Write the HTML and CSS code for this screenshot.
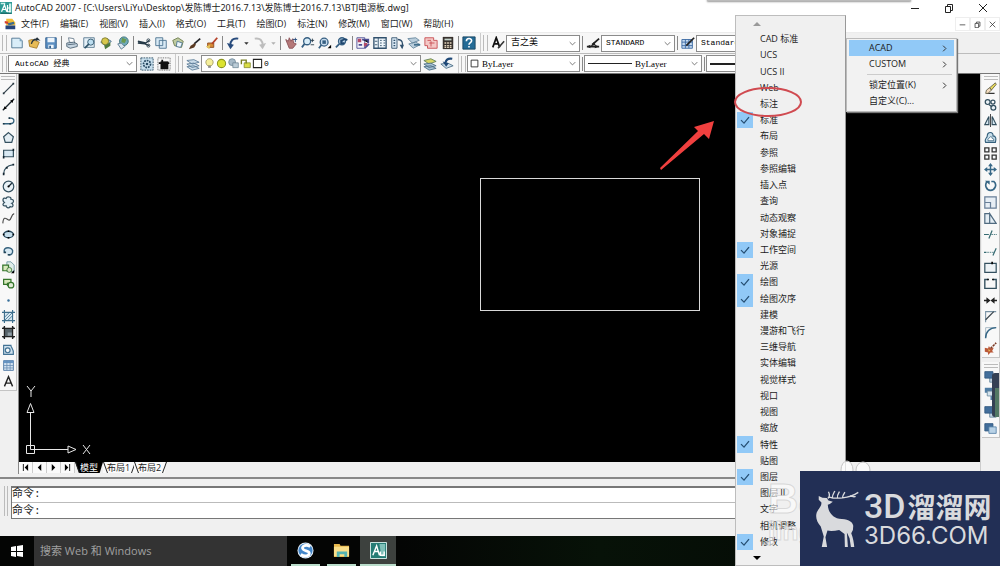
FILE: index.html
```html
<!DOCTYPE html>
<html lang="zh-CN">
<head>
<meta charset="utf-8">
<title>AutoCAD 2007</title>
<link rel="stylesheet" href="styles.css">
</head>
<body>
<svg class="sprite" aria-hidden="true">
  <symbol id="acad" viewBox="0 0 16 16"><path fill="#2d9a94" d="M0 0h16v16H0z"/><path fill="#c9efe9" d="M1 1h6v2H1zM12 2h3v12h-3z"/><path fill="none" stroke="#fff" stroke-width="1.600" d="M2 13 6 4l3 9M3 10h5M10 4v9h4M10 8h4"/><path stroke="#124c4c" d="M1 15h14"/></symbol>
  <symbol id="dwg" viewBox="0 0 16 16"><path fill="#f0bd35" d="m3 1 8 0 4 5v4H3z"/><path fill="#26457c" d="M2 10h13v5H2z"/><path fill="#d33c2e" d="m1 4 5 1-1 3-4-1z"/><path fill="#3d6b8d" d="m5 7 8-2 1 3-8 2z"/></symbol>
  <symbol id="new" viewBox="0 0 16 16"><path fill="#d9edf8" stroke="#49718f" d="M2 2.500h9l3 3v8H2z"/><path fill="#7ba4bd" d="M11 2v4h3z"/></symbol>
  <symbol id="open" viewBox="0 0 16 16"><path fill="#e7bb56" stroke="#a67c28" d="m2 5 4-1 8 3-3 7-8-2z"/><path fill="none" stroke="#26333d" stroke-width="1.500" d="M5 9c1-4 4-6 8-5l-2-2m2 2-3 1"/></symbol>
  <symbol id="save" viewBox="0 0 16 16"><path fill="#5c8fc2" stroke="#2f5d8c" d="M2 2h12v12H2z"/><path fill="#eef5fb" d="M4 2h8v5H4zM5 10h6v4H5z"/><path fill="#2f5d8c" d="M6 11h2v3H6z"/></symbol>
  <symbol id="print" viewBox="0 0 16 16"><path fill="#fff" stroke="#687b8c" d="m4 2 6 1 1 5-6-1z"/><path fill="#c6d5e1" stroke="#4d6273" d="m2 8 8-1 4 2v3l-8 2-4-2z"/><path stroke="#4d6273" d="m3 10 9-1"/></symbol>
  <symbol id="preview" viewBox="0 0 16 16"><path fill="#e4f0f8" stroke="#58788e" d="M2 2h12v11H2z"/><circle cx="10" cy="7" r="3.500" fill="#bddef0" stroke="#2e5369"/><path stroke="#2e5369" stroke-width="2" d="m8 9-5 5"/></symbol>
  <symbol id="publish" viewBox="0 0 16 16"><path fill="#a8c6d8" stroke="#436882" d="m2 7 7-4 5 3-6 6z"/><circle cx="7" cy="6" r="4" fill="#d8c84d" stroke="#7b7a30"/><path fill="#4f7a3e" d="m6 11 7-4v4l-6 4z"/></symbol>
  <symbol id="globe" viewBox="0 0 16 16"><circle cx="9" cy="6" r="5" fill="#6ea9b9" stroke="#376e75"/><path fill="#6a9b4f" d="m7 2 5 2-2 4-4-1z"/><path fill="#d8e6ef" stroke="#58788e" d="m2 9 4-1 4 4-4 3z"/></symbol>
  <symbol id="cut" viewBox="0 0 16 16"><path fill="none" stroke="#263a48" stroke-width="1.500" d="m1 6 9 2 4-3M1 8l8 1 5 2"/><circle cx="13" cy="5" r="1.700" fill="none" stroke="#263a48"/><circle cx="13" cy="11" r="1.700" fill="none" stroke="#263a48"/></symbol>
  <symbol id="copy" viewBox="0 0 16 16"><path fill="#d9eaf5" stroke="#49718f" d="M2 2h8v9H2zM6 5h8v9H6z"/></symbol>
  <symbol id="paste" viewBox="0 0 16 16"><path fill="#bfcba0" stroke="#6b7a4b" d="m2 5 6-3 6 4-2 7-8-2z"/><path fill="#eef7fc" stroke="#49718f" d="m7 6 6 2-2 5-5-1z"/></symbol>
  <symbol id="brush" viewBox="0 0 16 16"><path stroke="#26262a" stroke-width="2" d="m14 3-7 6"/><path fill="#5b3a22" d="m8 8-5 3-2 4 6-2 2-3z"/></symbol>
  <symbol id="match" viewBox="0 0 16 16"><path fill="#d68a35" stroke="#8b4a20" d="M3 8h7v5H3z"/><path stroke="#b5422a" stroke-width="2" d="M14 2 8 9"/><path fill="#e6c55d" d="m1 12 5-2-1 5z"/></symbol>
  <symbol id="undo" viewBox="0 0 16 16"><path fill="none" stroke="#284b7c" stroke-width="2.300" d="M14 3C8 2 5 5 5 11"/><path fill="#284b7c" d="m1 8 8 2-4 5z"/></symbol>
  <symbol id="redo" viewBox="0 0 16 16"><path fill="none" stroke="#bdbdbd" stroke-width="2.300" d="M2 3c6-1 9 2 9 8"/><path fill="#bdbdbd" d="m15 8-8 2 4 5z"/></symbol>
  <symbol id="dd" viewBox="0 0 8 16"><path fill="#333" d="M2 7h5L4.500 10z"/></symbol>
  <symbol id="pan" viewBox="0 0 16 16"><path fill="#b57878" stroke="#8a5157" d="m2 4 3 2 1-4 2 4 2-3 1 5 3 1-4 5H6z"/><path stroke="#284b7c" d="M10 4h5m-2-2v5"/></symbol>
  <symbol id="zoom" viewBox="0 0 16 16"><circle cx="7" cy="6" r="4" fill="#d9edf8" stroke="#365f82" stroke-width="1.500"/><path stroke="#365f82" stroke-width="2" d="m4 9-3 4"/><path stroke="#263a48" d="M11 5h4m-2-2v4m-2 3h4"/></symbol>
  <symbol id="zoomw" viewBox="0 0 16 16"><circle cx="7" cy="7" r="4.500" fill="#c8dced" stroke="#365f82" stroke-width="1.500"/><path fill="#365f82" d="M5 5h4v4H5z"/><path stroke="#365f82" stroke-width="2" d="m4 10-3 4"/><path d="M11 14h4v-4z"/></symbol>
  <symbol id="zoomp" viewBox="0 0 16 16"><circle cx="8" cy="6" r="4" fill="#bdd4e8" stroke="#365f82" stroke-width="1.500"/><path stroke="#365f82" stroke-width="2" d="m5 9-4 4"/><path fill="none" stroke="#1e466e" stroke-width="2" d="M7 7c2-4 5-4 7-2M7 4v4h4"/></symbol>
  <symbol id="props" viewBox="0 0 16 16"><path fill="#f4f4fa" stroke="#4c4e93" d="M1 2h9v12H1z"/><path fill="#b34a68" d="M2 3h4v4H2zM9 8h4v4H9z"/><path stroke="#4c4e93" stroke-width="2" d="M7 4h7v4M3 10h4m3 4 5-5"/></symbol>
  <symbol id="center" viewBox="0 0 16 16"><path fill="#edf5fa" stroke="#31516d" stroke-width="1.500" d="M1 2h14v12H1z"/><path stroke="#31516d" d="M6 2v12M2 6h3M2 10h3m3-5h2m2 0h2M8 8h2m2 0h2m-6 3h2m2 0h2"/></symbol>
  <symbol id="palette" viewBox="0 0 16 16"><path fill="#dceaf5" stroke="#31516d" d="M2 2h6v12H2z"/><path fill="none" stroke="#31516d" stroke-width="1.500" d="M4 5h2M4 8h2m-2 3h2m3-7c5 0 6 4 5 9"/><path fill="#31516d" d="M11 10h5l-2 5z"/></symbol>
  <symbol id="sheets" viewBox="0 0 16 16"><path fill="#b9cddb" stroke="#64859b" d="m1 3 9-1 4 3-8 3zM2 9l8-2 5 3-8 4z"/><path fill="#3f6d8b" d="M8 9h7v2H8z"/></symbol>
  <symbol id="markup" viewBox="0 0 16 16"><path fill="#f4c7c5" stroke="#c74c50" d="M1 2h10v3h4v9H4v-3H1z"/><path stroke="#c74c50" d="M4 5h4m-2 3h6m-4-2v6"/></symbol>
  <symbol id="calc" viewBox="0 0 16 16"><path fill="#38312d" d="M2 1h12v14H2z"/><path fill="#c5d3cb" d="M4 3h8v2H4z"/><path stroke="#e4d5bd" stroke-width="1.500" stroke-dasharray="2 1" d="M4 8h8m-8 3h8m-8 2h8"/></symbol>
  <symbol id="help" viewBox="0 0 16 16"><path fill="#246b96" stroke="#174460" d="M1 1h14v14H1z"/><path fill="none" stroke="#fff" stroke-width="1.800" d="M5 6c0-4 6-4 6-.5 0 2-3 2-3 4.500m0 1.500v1.500"/></symbol>
  <symbol id="tstyle" viewBox="0 0 16 16"><path fill="none" stroke="#111" stroke-width="2" d="m2 13 4-11 4 11M4 9h5"/><path stroke="#333" stroke-width="1.800" d="m15 6-7 8"/></symbol>
  <symbol id="dstyle" viewBox="0 0 16 16"><path stroke="#222" stroke-width="2" d="M1 12h14M15 3 7 10"/><path fill="#222" d="m1 12 4-2v4zm14 0-5-2v4zM9 7l-4 5 6-2z"/></symbol>
  <symbol id="tbstyle" viewBox="0 0 16 16"><path fill="#c5daf0" stroke="#3867a1" d="M1 4h12v10H1z"/><path stroke="#3867a1" d="M1 7h12M5 4v10m4-10v10M1 11h12"/><path stroke="#222" stroke-width="2" d="m15 2-9 9"/></symbol>
  <symbol id="gear" viewBox="0 0 16 16"><path fill="#c9e0ee" stroke="#294b64" stroke-dasharray="2 1" d="M1 1h14v14H1z"/><circle cx="8" cy="8" r="4" fill="none" stroke="#294b64" stroke-width="2" stroke-dasharray="2 1"/><circle cx="8" cy="8" r="1.500" fill="#294b64"/></symbol>
  <symbol id="mywork" viewBox="0 0 16 16"><path fill="none" stroke="#555" stroke-dasharray="1 1" d="M1 1h14v14H1z"/><path fill="#111" d="M4 5h9v9H4z"/><path stroke="#111" stroke-width="2" d="M2 7h12M6 3v4"/></symbol>
  <symbol id="layers" viewBox="0 0 16 16"><path fill="#cbdce9" stroke="#5f7f99" d="m1 4 8-1 6 3-8 2zm0 4 8-1 6 3-8 2zm0 3 8-1 6 3-8 2z"/></symbol>
  <symbol id="laymake" viewBox="0 0 16 16"><path fill="#d7d566" stroke="#5f7f59" d="m1 4 8-2 6 3-8 3z"/><path fill="#a7c1d3" stroke="#4b6e86" d="m1 8 8-1 6 3-8 2zm0 3 8-1 6 3-8 2z"/></symbol>
  <symbol id="layprev" viewBox="0 0 16 16"><path fill="#cbdce9" stroke="#4b6e86" d="m1 8 8-1 6 3-8 3z"/><path fill="none" stroke="#1d4776" stroke-width="2.500" d="M14 2C8 1 7 4 6 7"/><path fill="#1d4776" d="m3 5 7 2-3 4z"/></symbol>
  <symbol id="bulb" viewBox="0 0 16 16"><path fill="#f5ef9b" stroke="#8c8545" d="M5 11C0 6 4 1 8 1s8 5 3 10z"/><path stroke="#666" stroke-width="2" d="M6 13h4"/></symbol>
  <symbol id="sun" viewBox="0 0 16 16"><circle cx="8" cy="8" r="6" fill="#dce330" stroke="#8b9420" stroke-width="1.500"/></symbol>
  <symbol id="vp" viewBox="0 0 16 16"><circle cx="6" cy="6" r="5" fill="#a7bac8" stroke="#617c8e"/><path fill="#bccdd8" stroke="#617c8e" d="M7 7h8v7H7z"/></symbol>
  <symbol id="lock" viewBox="0 0 16 16"><path fill="#dadd45" stroke="#777e20" d="M6 7h9v7H6z"/><path fill="none" stroke="#777e20" stroke-width="2" d="M2 9V3h7v5"/></symbol>
  <symbol id="box" viewBox="0 0 16 16"><path fill="#fff" stroke="#222" stroke-width="1.500" d="M2 2h12v12H2z"/></symbol>
  <symbol id="line" viewBox="0 0 16 16"><path stroke="#34444e" stroke-width="1.500" d="M2 14 14 2"/><path fill="#25343e" d="M1 13h2v2H1zM13 1h2v2h-2z"/></symbol>
  <symbol id="xline" viewBox="0 0 16 16"><path stroke="#17232b" stroke-width="1.600" d="M1 15 15 1"/><path d="m2 14 1-4 3 3zM14 2l-4 1 3 3z"/></symbol>
  <symbol id="pline" viewBox="0 0 16 16"><path fill="none" stroke="#32607b" stroke-width="1.600" d="M2 12h8c6 0 6-7 1-7H9"/><path fill="#193645" d="M1 11h2v2H1zm8 0h2v2H9zM8 4h2v2H8z"/></symbol>
  <symbol id="polygon" viewBox="0 0 16 16"><path fill="#e3edf3" stroke="#34505f" stroke-width="1.500" d="m8 2 6 5-2 7H4L2 7z"/></symbol>
  <symbol id="rect" viewBox="0 0 16 16"><path fill="#d9e9f3" stroke="#34505f" stroke-width="1.500" d="M2 4h12v8H2z"/><path fill="#12232e" d="M13 2h2v3h-2zM1 11h2v3H1z"/></symbol>
  <symbol id="arc" viewBox="0 0 16 16"><path fill="none" stroke="#34505f" stroke-width="1.500" d="M2 14C2 8 6 3 14 2"/><path fill="#12232e" d="M1 12h2v3H1zM5 5h2v2H5zM13 1h2v2h-2z"/></symbol>
  <symbol id="circle" viewBox="0 0 16 16"><circle cx="8" cy="8" r="6.500" fill="#e9f2f7" stroke="#34505f" stroke-width="1.500"/><path stroke="#12232e" stroke-width="1.500" d="m8 8 4-4"/><circle cx="8" cy="8" r="1.300"/></symbol>
  <symbol id="cloud" viewBox="0 0 16 16"><path fill="#e5f0f6" stroke="#34505f" stroke-width="1.500" d="M3 8C0 6 1 1 5 3c1-3 7-2 6 1 4 0 4 4 1 5 3 2 1 6-2 4-2 3-5 1-5-1-4 1-5-2-2-4z"/></symbol>
  <symbol id="spline" viewBox="0 0 16 16"><path fill="none" stroke="#4d4d4d" stroke-width="1.400" d="M1 14C2 2 7 11 9 10c3-1 2-7 6-8"/></symbol>
  <symbol id="ellipse" viewBox="0 0 16 16"><ellipse cx="8" cy="8" rx="6" ry="4" fill="#c7deeb" stroke="#24465b" stroke-width="1.700"/><path d="M7 3h2v2H7zM1 7h2v2H1zm12 0h2v2h-2zM7 11h2v2H7z"/></symbol>
  <symbol id="earc" viewBox="0 0 16 16"><path fill="#d7e8f2" stroke="#34607c" stroke-width="1.700" d="M3 9C0 1 15 2 13 9c-1 4-5 3-5 3"/><path fill="#24465b" d="M2 8h3v2H2zm5 3h3v2H7z"/></symbol>
  <symbol id="insert" viewBox="0 0 16 16"><path fill="#dfece9" stroke="#638e9b" d="M6 1h5l4 4v8H6z"/><path fill="#d8e9bd" stroke="#34752b" stroke-width="1.500" d="M1 5h7v7H1z"/><circle cx="9" cy="11" r="3" fill="#d7e5c6" stroke="#34752b"/><path d="M15 11v4h-4z"/></symbol>
  <symbol id="block" viewBox="0 0 16 16"><path fill="#d8e9bd" stroke="#34752b" stroke-width="1.500" d="M2 3h9v6H2z"/><circle cx="11" cy="10" r="3.500" fill="#e2ecd7" stroke="#34752b" stroke-width="1.500"/><path stroke="#34752b" stroke-width="2" d="M7 7v4"/></symbol>
  <symbol id="point" viewBox="0 0 16 16"><circle cx="8" cy="8" r="1.500" fill="#386f9a"/></symbol>
  <symbol id="hatch" viewBox="0 0 16 16"><path fill="#d6e8f2" stroke="#3f6f8d" stroke-width="1.400" d="M3 3h10v10H3zM3 0v3H0m13-3v3h3M0 13h3v3m10 0v-3h3"/><path stroke="#3f6f8d" d="m3 9 6-6M3 13 13 3M7 13l6-6"/></symbol>
  <symbol id="gradient" viewBox="0 0 16 16"><path fill="#58646b" stroke="#222" stroke-width="1.600" d="M3 3h10v10H3zM3 0v3H0m13-3v3h3M0 13h3v3m10 0v-3h3"/><path fill="#8d9ba3" d="M7 8h5v4H7z"/></symbol>
  <symbol id="region" viewBox="0 0 16 16"><path fill="#cfe1ed" stroke="#427294" stroke-width="1.400" d="M2 3h9c0 3 4 4 3 11H2z"/><circle cx="7" cy="9" r="3" fill="#f4f8fa" stroke="#427294" stroke-width="1.500"/></symbol>
  <symbol id="table" viewBox="0 0 16 16"><path fill="#d5e4f2" stroke="#416c9d" d="M2 2h12v12H2z"/><path fill="#6695c4" d="M2 2h12v3H2z"/><path stroke="#6b8fb5" d="M6 2v12m4-12v12M2 8h12M2 11h12"/></symbol>
  <symbol id="text" viewBox="0 0 16 16"><path fill="none" stroke="#222" stroke-width="1.700" d="m3 14 5-12 5 12M5 10h6"/></symbol>
  <symbol id="erase" viewBox="0 0 16 16"><path stroke="#333" stroke-width="1.500" d="M3 14h10"/><path fill="#e7d95c" stroke="#5b5940" d="m7 7 7-6 1 2-6 7z"/><path fill="#f4dcc0" stroke="#5b5940" d="m3 10 4-3 2 3-4 4H2z"/></symbol>
  <symbol id="dup" viewBox="0 0 16 16"><circle cx="4.500" cy="5" r="3" fill="#e9f1f6" stroke="#34505f" stroke-width="1.500"/><circle cx="11.500" cy="12" r="3" fill="#e9f1f6" stroke="#34505f" stroke-width="1.500"/><circle cx="11" cy="5" r="2.500" fill="none" stroke="#34505f" stroke-width="1.500"/><path fill="none" stroke="#34505f" stroke-width="1.500" d="m6 8 4 3"/></symbol>
  <symbol id="mirror" viewBox="0 0 16 16"><path fill="#d7e8f2" stroke="#34505f" stroke-width="1.400" d="M6 3v10H1zm4 0v10h5z"/><path stroke="#222" d="M8 0v16"/></symbol>
  <symbol id="offset" viewBox="0 0 16 16"><path fill="#c8deea" stroke="#34607c" stroke-width="1.400" d="M2 14C0 9 4 9 4 6c0-6 8-5 7 0 4 0 4 4 3 8z"/><path fill="#fff" stroke="#34607c" d="M5 12c-1-2 1-3 2-4 1-2 3-1 3 1 2 0 2 1 2 3z"/></symbol>
  <symbol id="array" viewBox="0 0 16 16"><path fill="#f7fafc" stroke="#333" stroke-width="1.600" d="M1 1h5v5H1zm9 0h5v5h-5zM1 10h5v5H1zm9 0h5v5h-5z"/></symbol>
  <symbol id="move" viewBox="0 0 16 16"><path stroke="#376786" stroke-width="1.800" d="M8 2v12M2 8h12"/><path fill="#376786" d="m8 0 3 4H5zm0 16 3-4H5zM0 8l4-3v6zm16 0-4-3v6z"/></symbol>
  <symbol id="rotate" viewBox="0 0 16 16"><path fill="none" stroke="#376786" stroke-width="2" d="M4 3C0 7 3 14 8 14s9-7 4-11H9"/><path fill="#376786" d="M1 2h6v5z"/></symbol>
  <symbol id="scale" viewBox="0 0 16 16"><path fill="#e7eef5" stroke="#687f98" stroke-width="1.500" d="M1 1h14v14H1zM1 8h7v7"/></symbol>
  <symbol id="stretch" viewBox="0 0 16 16"><path fill="#e4edf4" stroke="#506b80" stroke-width="1.500" d="M1 2h6v12H1zm6 0 8 12H7z"/></symbol>
  <symbol id="trim" viewBox="0 0 16 16"><path stroke="#366b72" stroke-width="1.500" d="M0 8h6m4-5L6 13"/><path stroke="#366b72" stroke-dasharray="2 1" d="M9 8h7"/></symbol>
  <symbol id="extend" viewBox="0 0 16 16"><path stroke="#366b72" stroke-width="1.500" d="M0 9h3m12-5-4 9"/><path stroke="#366b72" stroke-dasharray="2 1" d="M4 9h8"/></symbol>
  <symbol id="break1" viewBox="0 0 16 16"><path fill="#eef3f6" stroke="#34505f" stroke-width="1.500" d="M1 3h14v11H1z"/><path d="M9 1h2v3H9z"/></symbol>
  <symbol id="break2" viewBox="0 0 16 16"><path fill="none" stroke="#34505f" stroke-width="1.700" d="M5 3H1v11h14V3h-4"/><path d="M4 2h2v2H4zm6 0h2v2h-2z"/></symbol>
  <symbol id="join" viewBox="0 0 16 16"><path stroke="#222" stroke-width="2" d="M0 8h5m6 0h5"/><path fill="#222" d="m3 4 5 4-5 4zm10 0L8 8l5 4z"/></symbol>
  <symbol id="chamfer" viewBox="0 0 16 16"><path fill="none" stroke="#7791a3" stroke-width="1.300" d="M2 15V2h13"/><path fill="none" stroke="#39444b" stroke-width="1.500" d="M2 12 12 2"/></symbol>
  <symbol id="fillet" viewBox="0 0 16 16"><path fill="none" stroke="#9aaebb" d="M2 14V2h13"/><path fill="none" stroke="#376786" stroke-width="1.800" d="M2 15C2 7 7 2 15 2"/></symbol>
  <symbol id="explode" viewBox="0 0 16 16"><path fill="#b95737" d="m1 7 4 1 1-3 2 3 4-1-2 4 2 2-4 0-3 3v-3l-4-1z"/><path stroke="#7c3a25" stroke-width="2" stroke-dasharray="3 1" d="m8 8 7-7"/><path fill="#e9bc55" d="m5 9 3 1-2 2z"/></symbol>
  <symbol id="order" viewBox="0 0 16 16"><path fill="#bed1df" stroke="#66869b" d="M7 7h8v8H7z"/><path fill="#426e9b" stroke="#2f567e" d="M1 2h10v8H1z"/></symbol>
  <symbol id="order2" viewBox="0 0 16 16"><path fill="#507da4" d="M1 1h9v6H1zm7 7h8v8H8z"/><path fill="#d6e4ee" stroke="#66869b" d="M4 5h8v6H4z"/></symbol>
  <symbol id="order3" viewBox="0 0 16 16"><path fill="#426e9b" stroke="#2f567e" d="M1 2h10v9H1z"/><path fill="#b9d2e6" stroke="#507da4" d="M6 6h9v8H6z"/></symbol>
  <symbol id="chev" viewBox="0 0 10 10"><path fill="none" stroke="#444" d="m1 3 4 4 4-4"/></symbol>
  <symbol id="right" viewBox="0 0 10 10"><path fill="none" stroke="#333" stroke-width="1.400" d="m3 1 4 4-4 4"/></symbol>
  <symbol id="check" viewBox="0 0 10 10"><path fill="none" stroke="#264f73" stroke-width="1.300" d="m1 5 3 3 5-6"/></symbol>
  <symbol id="min" viewBox="0 0 10 10"><path stroke="#222" d="M1 5.500h8"/></symbol>
  <symbol id="restore" viewBox="0 0 10 10"><path fill="none" stroke="#222" d="M1.500 3.500h5v6h-5zM3.500 3V1.500h5v6H7"/></symbol>
  <symbol id="close" viewBox="0 0 10 10"><path stroke="#222" d="m1 1 8 8m0-8L1 9"/></symbol>
</svg>

<div class="app">
  <header class="titlebar">
    <svg class="appicon"><use href="#acad"/></svg>
    <h1>AutoCAD 2007 - [C:\Users\LiYu\Desktop\发陈博士2016.7.13\发陈博士2016.7.13\BTJ电源板.dwg]</h1>
    <div class="wincontrols">
      <button aria-label="最小化"><svg><use href="#min"/></svg></button>
      <button aria-label="还原"><svg><use href="#restore"/></svg></button>
      <button aria-label="关闭"><svg><use href="#close"/></svg></button>
    </div>
  </header>
  <nav class="menubar">
    <svg class="docicon"><use href="#dwg"/></svg>
    <button>文件(F)</button><button>编辑(E)</button><button>视图(V)</button><button>插入(I)</button><button>格式(O)</button><button>工具(T)</button><button>绘图(D)</button><button>标注(N)</button><button>修改(M)</button><button>窗口(W)</button><button>帮助(H)</button>
    <div class="doccontrols">
      <button aria-label="最小化图形"><svg><use href="#min"/></svg></button>
      <button aria-label="还原图形"><svg><use href="#restore"/></svg></button>
      <button aria-label="关闭图形"><svg><use href="#close"/></svg></button>
    </div>
  </nav>

  <div class="toolrow">
    <div class="toolbar">
      <i class="grip"></i>
      <button class="tool" aria-label="新建"><svg><use href="#new"/></svg></button>
      <button class="tool" aria-label="打开"><svg><use href="#open"/></svg></button>
      <button class="tool" aria-label="保存"><svg><use href="#save"/></svg></button>
      <i class="sep"></i>
      <button class="tool" aria-label="打印"><svg><use href="#print"/></svg></button>
      <button class="tool" aria-label="打印预览"><svg><use href="#preview"/></svg></button>
      <button class="tool" aria-label="发布"><svg><use href="#publish"/></svg></button>
      <button class="tool" aria-label="三维 DWF"><svg><use href="#globe"/></svg></button>
      <i class="sep"></i>
      <button class="tool" aria-label="剪切"><svg><use href="#cut"/></svg></button>
      <button class="tool" aria-label="复制"><svg><use href="#copy"/></svg></button>
      <button class="tool" aria-label="粘贴"><svg><use href="#paste"/></svg></button>
      <button class="tool" aria-label="特性匹配"><svg><use href="#brush"/></svg></button>
      <button class="tool" aria-label="块编辑器"><svg><use href="#match"/></svg></button>
      <i class="sep"></i>
      <button class="tool" aria-label="放弃"><svg><use href="#undo"/></svg></button>
      <button class="drop" aria-label="放弃列表"><svg><use href="#dd"/></svg></button>
      <button class="tool" aria-label="重做"><svg><use href="#redo"/></svg></button>
      <button class="drop off" aria-label="重做列表"><svg><use href="#dd"/></svg></button>
      <i class="sep"></i>
      <button class="tool" aria-label="平移"><svg><use href="#pan"/></svg></button>
      <button class="tool" aria-label="实时缩放"><svg><use href="#zoom"/></svg></button>
      <button class="tool" aria-label="窗口缩放"><svg><use href="#zoomw"/></svg></button>
      <button class="tool" aria-label="缩放上一个"><svg><use href="#zoomp"/></svg></button>
      <i class="sep"></i>
      <button class="tool" aria-label="特性"><svg><use href="#props"/></svg></button>
      <button class="tool" aria-label="设计中心"><svg><use href="#center"/></svg></button>
      <button class="tool" aria-label="工具选项板"><svg><use href="#palette"/></svg></button>
      <button class="tool" aria-label="图纸集"><svg><use href="#sheets"/></svg></button>
      <button class="tool" aria-label="标记集"><svg><use href="#markup"/></svg></button>
      <button class="tool" aria-label="计算器"><svg><use href="#calc"/></svg></button>
      <i class="sep"></i>
      <button class="tool" aria-label="帮助"><svg><use href="#help"/></svg></button>
    </div>
    <div class="toolbar">
      <i class="grip"></i>
      <button class="tool" aria-label="文字样式管理"><svg><use href="#tstyle"/></svg></button>
      <span class="combo style"><select class="cjk" aria-label="文字样式"><option>吉之美</option></select><svg class="chev"><use href="#chev"/></svg></span>
      <i class="sep"></i>
      <button class="tool" aria-label="标注样式管理"><svg><use href="#dstyle"/></svg></button>
      <span class="combo style"><select aria-label="标注样式"><option>STANDARD</option></select><svg class="chev"><use href="#chev"/></svg></span>
      <i class="sep"></i>
      <button class="tool" aria-label="表格样式管理"><svg><use href="#tbstyle"/></svg></button>
      <span class="combo style"><select aria-label="表格样式"><option>Standard</option></select><svg class="chev"><use href="#chev"/></svg></span>
    </div>
  </div>
  <div class="toolrow second">
    <div class="toolbar">
      <i class="grip"></i>
      <span class="combo space"><select aria-label="工作空间"><option>AutoCAD 经典</option></select><svg class="chev"><use href="#chev"/></svg></span>
      <button class="tool" aria-label="工作空间设置"><svg><use href="#gear"/></svg></button>
      <button class="tool" aria-label="我的工作空间"><svg><use href="#mywork"/></svg></button>
    </div>
    <div class="toolbar">
      <i class="grip"></i>
      <button class="tool" aria-label="图层特性管理器"><svg><use href="#layers"/></svg></button>
      <span class="combo layer"><select aria-label="图层"><option>0</option></select>
        <span class="marks"><svg><use href="#bulb"/></svg><svg><use href="#sun"/></svg><svg><use href="#vp"/></svg><svg><use href="#lock"/></svg><svg><use href="#box"/></svg></span>
        <svg class="chev"><use href="#chev"/></svg></span>
      <button class="tool" aria-label="置为当前图层"><svg><use href="#laymake"/></svg></button>
      <button class="tool" aria-label="上一个图层"><svg><use href="#layprev"/></svg></button>
    </div>
    <div class="toolbar">
      <i class="grip"></i>
      <span class="combo color"><select aria-label="颜色"><option>ByLayer</option></select><span class="marks"><svg><use href="#box"/></svg></span><svg class="chev"><use href="#chev"/></svg></span>
      <i class="sep"></i>
      <span class="combo ltype"><select aria-label="线型"><option>ByLayer</option></select><i class="stroke"></i><svg class="chev"><use href="#chev"/></svg></span>
      <i class="sep"></i>
      <span class="combo weight"><select aria-label="线宽"><option>ByLayer</option></select><i class="stroke"></i><svg class="chev"><use href="#chev"/></svg></span>
    </div>
  </div>

  <main class="work">
    <aside class="side">
      <div class="vbar draw">
        <i class="hgrip"></i>
        <button aria-label="直线"><svg><use href="#line"/></svg></button>
        <button aria-label="构造线"><svg><use href="#xline"/></svg></button>
        <button aria-label="多段线"><svg><use href="#pline"/></svg></button>
        <button aria-label="正多边形"><svg><use href="#polygon"/></svg></button>
        <button aria-label="矩形"><svg><use href="#rect"/></svg></button>
        <button aria-label="圆弧"><svg><use href="#arc"/></svg></button>
        <button aria-label="圆"><svg><use href="#circle"/></svg></button>
        <button aria-label="修订云线"><svg><use href="#cloud"/></svg></button>
        <button aria-label="样条曲线"><svg><use href="#spline"/></svg></button>
        <button aria-label="椭圆"><svg><use href="#ellipse"/></svg></button>
        <button aria-label="椭圆弧"><svg><use href="#earc"/></svg></button>
        <button aria-label="插入块"><svg><use href="#insert"/></svg></button>
        <button aria-label="创建块"><svg><use href="#block"/></svg></button>
        <button aria-label="点"><svg><use href="#point"/></svg></button>
        <button aria-label="图案填充"><svg><use href="#hatch"/></svg></button>
        <button aria-label="渐变色"><svg><use href="#gradient"/></svg></button>
        <button aria-label="面域"><svg><use href="#region"/></svg></button>
        <button aria-label="表格"><svg><use href="#table"/></svg></button>
        <button aria-label="多行文字"><svg><use href="#text"/></svg></button>
      </div>
    </aside>
    <section class="drawing">
      <div class="canvas">
        <div class="shape"></div>
        <svg class="ucs" viewBox="0 0 70 74" role="img" aria-label="UCS">
          <g fill="none" stroke="#e8e8e8"><path d="M4.500 60.500h8v8h-8zM8.500 64.500V27m0 37.500H46M8.500 18.500l3.500 9H5zM46 61v7l8-3.500z"/><path d="m5 1 4 5 4-5M9 6v6m52 48 7 9m0-9-7 9"/></g>
        </svg>
      </div>
      <div class="layouts">
        <button class="step" aria-label="第一个"><svg viewBox="0 0 8 8"><path d="M1 0h1v8H1zm6 0v8L3 4z"/></svg></button>
        <button class="step" aria-label="上一个"><svg viewBox="0 0 8 8"><path d="M6 0v8L2 4z"/></svg></button>
        <button class="step" aria-label="下一个"><svg viewBox="0 0 8 8"><path d="M2 0v8l4-4z"/></svg></button>
        <button class="step" aria-label="最后一个"><svg viewBox="0 0 8 8"><path d="M1 0v8l4-4zm5 0h1v8H6z"/></svg></button>
        <button class="tab current">模型</button><button class="tab">布局1</button><button class="tab">布局2</button>
      </div>
    </section>
    <aside class="side right">
      <div class="vbar modify">
        <i class="hgrip"></i>
        <button aria-label="删除"><svg><use href="#erase"/></svg></button>
        <button aria-label="复制对象"><svg><use href="#dup"/></svg></button>
        <button aria-label="镜像"><svg><use href="#mirror"/></svg></button>
        <button aria-label="偏移"><svg><use href="#offset"/></svg></button>
        <button aria-label="阵列"><svg><use href="#array"/></svg></button>
        <button aria-label="移动"><svg><use href="#move"/></svg></button>
        <button aria-label="旋转"><svg><use href="#rotate"/></svg></button>
        <button aria-label="比例缩放"><svg><use href="#scale"/></svg></button>
        <button aria-label="拉伸"><svg><use href="#stretch"/></svg></button>
        <button aria-label="修剪"><svg><use href="#trim"/></svg></button>
        <button aria-label="延伸"><svg><use href="#extend"/></svg></button>
        <button aria-label="打断于点"><svg><use href="#break1"/></svg></button>
        <button aria-label="打断"><svg><use href="#break2"/></svg></button>
        <button aria-label="合并"><svg><use href="#join"/></svg></button>
        <button aria-label="倒角"><svg><use href="#chamfer"/></svg></button>
        <button aria-label="圆角"><svg><use href="#fillet"/></svg></button>
        <button aria-label="分解"><svg><use href="#explode"/></svg></button>
      </div>
      <div class="vbar sort">
        <i class="hgrip"></i>
        <button aria-label="前置"><svg><use href="#order"/></svg></button>
        <button aria-label="后置"><svg><use href="#order2"/></svg></button>
        <button aria-label="置于对象之上"><svg><use href="#order"/></svg></button>
        <button aria-label="置于对象之下"><svg><use href="#order3"/></svg></button>
        <i class="meter"></i>
      </div>
    </aside>
  </main>

  <section class="command">
    <i class="grip"></i>
    <div class="lines">
      <div class="history">命令:</div>
      <div class="prompt"><label for="cmd">命令:</label><input id="cmd" type="text"></div>
    </div>
  </section>
  <div class="status"></div>

  <footer class="taskbar">
    <button class="start" aria-label="开始"><svg viewBox="0 0 12 12"><path fill="#fff" d="m0 2 5-1v5H0zm6-1 6-1v6H6zM0 7h5v5l-5-1zm6 0h6v5l-6-1z"/></svg></button>
    <input class="search" type="text" aria-label="搜索" placeholder="搜索 Web 和 Windows">
    <div class="apps">
      <button aria-label="搜狗浏览器"><svg viewBox="0 0 18 18"><circle cx="9" cy="9" r="8.500" fill="#e8f1fa"/><circle cx="9" cy="9" r="7.500" fill="#4386c9"/><path fill="none" stroke="#fff" stroke-width="3" d="M14 5C10 2 5 4 6 7s7 2 7 5-5 4-9 1"/></svg></button>
      <button aria-label="文件资源管理器"><svg viewBox="0 0 18 18"><path fill="#e8b94d" d="M1 2h6l1 2h9v12H1z"/><path fill="#f9df8b" d="M1 5h16v10H1z"/><path fill="#54b4b2" d="M4 10h11v6h-3v-3H7v3H4z"/></svg></button>
      <button class="active" aria-label="AutoCAD"><svg viewBox="0 0 18 18"><path fill="#257c75" stroke="#d6eeea" d="M.5.500h17v17H.5z"/><path fill="#7fc0b8" d="M10 2h6v13h-4z"/><path fill="none" stroke="#fff" stroke-width="1.500" d="m3 14 4-10 3 10M4 10h5m2 0v4h4v-4"/></svg></button>
    </div>
  </footer>
</div>

<i class="flyout"></i>

<div class="popup" role="menu" aria-label="ACAD 工具栏">
  <svg class="more" viewBox="0 0 8 4"><path fill="#999" d="M0 4h8L4 0z"/></svg>
  <div class="entries">
    <button>CAD 标准</button>
    <button>UCS</button>
    <button>UCS II</button>
    <button>Web</button>
    <button>标注</button>
    <button class="on"><svg><use href="#check"/></svg>标准</button>
    <button>布局</button>
    <button>参照</button>
    <button>参照编辑</button>
    <button>插入点</button>
    <button>查询</button>
    <button>动态观察</button>
    <button>对象捕捉</button>
    <button class="on"><svg><use href="#check"/></svg>工作空间</button>
    <button>光源</button>
    <button class="on"><svg><use href="#check"/></svg>绘图</button>
    <button class="on"><svg><use href="#check"/></svg>绘图次序</button>
    <button>建模</button>
    <button>漫游和飞行</button>
    <button>三维导航</button>
    <button>实体编辑</button>
    <button>视觉样式</button>
    <button>视口</button>
    <button>视图</button>
    <button>缩放</button>
    <button class="on"><svg><use href="#check"/></svg>特性</button>
    <button>贴图</button>
    <button class="on"><svg><use href="#check"/></svg>图层</button>
    <button>图层 II</button>
    <button>文字</button>
    <button>相机调整</button>
    <button class="on"><svg><use href="#check"/></svg>修改</button>
  </div>
  <svg class="more" viewBox="0 0 8 4"><path d="M0 0h8L4 4z"/></svg>
</div>

<div class="submenu" role="menu" aria-label="工具栏">
  <button class="hot"><span>ACAD</span><svg><use href="#right"/></svg></button>
  <button><span>CUSTOM</span><svg><use href="#right"/></svg></button>
  <hr>
  <button><span>锁定位置(K)</span><svg><use href="#right"/></svg></button>
  <button><span>自定义(C)...</span></button>
</div>

<svg class="arrow" viewBox="0 0 56 50" aria-hidden="true"><path fill="#f0403f" d="m1 50-1-2 38-37-4-4 20-6-5 18-5-5z"/></svg>
<svg class="ring" viewBox="0 0 70 32" aria-hidden="true"><ellipse cx="35" cy="16" rx="33" ry="14" fill="none" stroke="#d04a50" stroke-width="2"/></svg>

<svg class="haze" viewBox="0 0 110 90" aria-hidden="true">
  <g fill="#fff" fill-opacity=".7" stroke="#c4c4c4"><ellipse cx="81" cy="10" rx="6" ry="9"/><ellipse cx="97" cy="10" rx="7" ry="8"/></g>
  <g class="hazetext"><text x="2" y="53" font-size="42">Bai</text><text x="2" y="80" font-size="26">jing</text></g>
</svg>
<div class="brand">
  <svg viewBox="240 475 140 185" aria-hidden="true"><path fill="#d9dadd" d="m257 499 11 5 13 1 5 7 13 4-9 7-6 2c1 20 12 37 34 42 23 1 39 6 42 21l-1 12-5 10c6 15 8 30 9 41h-10l-4-26-8-17 3 43h-9l-1-39-16-12c-13 3-25 4-35 2l-6 20 5 29h-16l6-31-9-30c-13-15-16-30-12-42 6-13 15-18 14-30l-8-8z"/><g fill="none" stroke="#d9dadd" stroke-width="4"><path d="M284 506c7-6 6-12 2-20m3 16c17 6 58 5 86-14M298 504c-1-8 3-12 7-20m8 22c-2-10 2-14 6-20m9 18c0-6 3-11 7-17m15 11c7 3 12 5 17 2"/></g></svg>
  <div class="words"><div class="name"><span>3D</span>溜溜网</div><div class="site">3D66.COM</div></div>
</div>
</body>
</html>
```
FILE: styles.css
```css
* { box-sizing: border-box; }
body {
  margin: 0;
  height: 100vh;
  position: relative;
  overflow: hidden;
  background: #f0f0f0;
  color: #1c1c1c;
  font-family: "Open Sans", "Noto Sans CJK SC", sans-serif;
  font-size: 9px;
  line-height: 14px;
}
button, input, select { font: inherit; color: inherit; border: 0; padding: 0; margin: 0; background: none; border-radius: 0; }
button { display: flex; align-items: center; justify-content: center; white-space: nowrap; }
i { display: block; flex: none; }
svg { display: block; flex: none; }
.sprite { position: absolute; width: 0; height: 0; }

.app { height: 100%; display: flex; flex-direction: column; }

.titlebar, .menubar { flex: none; height: 16px; display: flex; align-items: center; background: #fff; }
.appicon { width: 12px; height: 12px; }
.titlebar h1 { margin: 0 0 0 3px; font-family: "Noto Sans", "Noto Sans CJK SC", sans-serif; font-size: 9px; font-weight: 400; white-space: nowrap; }
.wincontrols { margin-left: auto; display: flex; }
.wincontrols button { width: 34px; height: 16px; }
.wincontrols svg { width: 10px; height: 10px; }
.menubar { padding-left: 4px; gap: 11px; }
.docicon { width: 12px; height: 12px; margin-right: -6px; }
.doccontrols { margin-left: auto; display: flex; }
.doccontrols button { width: 15px; height: 14px; border: 1px solid #eee; }
.doccontrols svg { width: 7px; height: 7px; }

.toolrow { flex: none; height: 21px; display: flex; background: #f0f0f0; border-top: 1px solid #ececec; }
.toolrow.second { height: 21px; border-top: 1px solid #bcbcbc; border-bottom: 1px solid #777; }
.toolbar { flex: none; display: flex; align-items: center; background: #f7f7f7; border-right: 1px solid #ccc; padding-right: 3px; }
.grip { width: 5px; height: 16px; margin: 0 1px 0 2px; border: solid #bbb; border-width: 0 1px; }
.sep { width: 1px; height: 14px; margin: 0 1px 0 2px; background: #888; }
.tool { width: 17px; height: 18px; }
.tool svg { width: 14px; height: 14px; }
.drop { width: 10px; height: 18px; }
.drop svg { width: 8px; height: 14px; }
.off { opacity: .35; }
.combo { display: grid; align-items: center; height: 17px; background: #fff; border: 1px solid #8b8b8b; }
.combo > * { grid-area: 1 / 1; }
.combo select { appearance: none; width: 100%; height: 15px; padding-left: 4px; color: #000; font-family: "Liberation Mono", "Noto Sans CJK SC", monospace; font-size: 8px; }
.combo select.cjk { font-size: 9px; }
.chev { width: 7px; height: 7px; justify-self: end; margin-right: 3px; pointer-events: none; }
.style { width: 74px; }
.space { width: 129px; margin-right: 1px; }
.space select { padding-left: 6px; }
.layer { width: 220px; }
.layer select { padding-left: 62px; }
.marks { display: flex; gap: 1px; padding-left: 2px; pointer-events: none; }
.marks svg { width: 11px; height: 11px; }
.color { width: 113px; }
.color .marks svg { width: 9px; height: 9px; }
.combo.color select, .combo.ltype select { padding-left: 14px; font-family: "Liberation Serif", serif; font-size: 9px; }
.ltype { width: 118px; }
.combo.ltype select { padding-left: 50px; }
.stroke { width: 44px; height: 1px; margin-left: 3px; background: #222; }
.weight { width: 110px; }
.weight select { padding-left: 50px; }
.weight .stroke { height: 2px; }

.work { flex: 1; min-height: 0; display: flex; }
.side { flex: none; width: 19px; border-right: 1px solid #888; }
.side.right { width: 20px; border-right: 0; border-left: 1px solid #ccc; }
.vbar { display: flex; flex-direction: column; align-items: center; background: #f8f8f8; border: solid #c4c4c4; border-width: 0 1px 1px 0; }
.vbar button { flex: 1; width: 14px; }
.vbar svg { width: 13px; height: 13px; }
.hgrip { width: 14px; height: 4px; margin-top: 2px; border: solid #bbb; border-width: 1px 0; }
.draw { height: 317px; width: 17px; }
.modify { height: 284px; margin-left: 1px; }
.sort { height: 76px; margin: 4px 0 0 1px; position: relative; }
.meter { position: absolute; top: 11px; right: 0; width: 7px; height: 44px; border-radius: 3px 0 0 3px; background: linear-gradient(90deg, #344054 50%, transparent 50%), linear-gradient(#344054 35%, #527864 35%); }
.drawing { flex: 1; min-width: 0; display: flex; flex-direction: column; }
.canvas { flex: 1; position: relative; background: #000; overflow: hidden; }
.shape { position: absolute; left: 461px; top: 104px; width: 220px; height: 133px; border: 1px solid #d8d8d8; }
.ucs { position: absolute; left: 3px; bottom: 3px; width: 70px; height: 74px; }
.layouts { flex: none; height: 12px; display: flex; background: #f0f0f0; }
.step { width: 14px; height: 11px; background: #fafafa; border-right: 1px solid #ccc; }
.step svg { width: 7px; height: 7px; }
.tab { position: relative; width: 31px; height: 11px; background: #fafafa; line-height: 11px; }
.tab::before, .tab::after { content: ""; position: absolute; top: 0; height: 11px; width: 1px; background: #222; }
.tab::before { left: 2px; transform: skewX(20deg); }
.tab::after { right: 0; transform: skewX(-20deg); }
.tab.current { width: 28px; background: #000; color: #fff; clip-path: polygon(0 0, 100% 0, 88% 100%, 14% 100%); }

.command { flex: none; display: flex; margin-top: 3px; padding: 7px 0 0 2px; border-top: 2px solid #888; }
.command .grip { height: 30px; margin: 0 3px 0 2px; width: 4px; }
.lines { flex: 1; background: #fff; border: solid #777; border-width: 2px 0 1px 1px; font-family: "Liberation Mono", "Noto Sans CJK SC", monospace; font-size: 11px; }
.history { height: 15px; line-height: 12px; border-bottom: 1px solid #bbb; }
.prompt { height: 15px; display: flex; align-items: center; }
.prompt input { flex: 1; height: 14px; }
.status { flex: none; height: 17px; }

.taskbar { flex: none; height: 30px; display: flex; background: linear-gradient(90deg, #040504 40%, #071208 60%, #030503); }
.start { width: 34px; }
.start svg { width: 12px; height: 12px; }
.search { width: 253px; padding-left: 6px; background: #333; font-size: 11px; }
.search::placeholder { color: #a0a0a0; opacity: 1; }
.apps { display: flex; gap: 7px; padding-left: 4px; }
.apps button { width: 29px; border-bottom: 2px solid #b9dcca; }
.apps .active { width: 36px; margin-left: -3px; background: #3d413e; }
.apps svg { width: 17px; height: 17px; }

.flyout { position: absolute; left: 707px; right: 89px; top: -4px; height: 5px; background: #bbb; box-shadow: 0 1px 2px #999; }

.popup { position: absolute; left: 735px; top: 15px; bottom: 0; width: 111px; display: flex; flex-direction: column; align-items: center; background: #f0f0f0; border: 1px solid #bdbdbd; border-right-color: #999; }
.more { width: 8px; height: 4px; margin: 6px 68px 5px 0; }
.entries { flex: 1; align-self: stretch; min-height: 0; display: flex; flex-direction: column; }
.entries button { flex: 1; min-height: 0; justify-content: flex-start; padding-left: 24px; line-height: 12px; }
.entries svg { width: 16px; height: 100%; padding: 3px; margin: 0 7px 0 -23px; background: #91c9f7; }

.submenu { position: absolute; left: 846px; top: 38px; width: 111px; padding: 1px 2px 2px; background: #f2f2f2; border: 1px solid #bbb; box-shadow: 1px 1px 1px #777; }
.submenu button { width: 100%; height: 16px; justify-content: space-between; padding: 0 6px 0 20px; }
.submenu svg { width: 7px; height: 7px; }
.submenu .hot { background: #91c9f7; }
.submenu hr { margin: 2px 2px 2px 18px; border: 0; border-top: 1px solid #ccc; }

.arrow { position: absolute; left: 660px; top: 120px; width: 56px; height: 50px; }
.ring { position: absolute; left: 733px; top: 86px; width: 70px; height: 32px; }
.haze { position: absolute; left: 766px; top: 460px; width: 110px; height: 90px; }
.hazetext { font-family: "Liberation Sans", sans-serif; font-weight: 700; fill: #fff; fill-opacity: .6; stroke: #ccc; stroke-opacity: .7; }
.brand { position: absolute; right: 0; bottom: 0; width: 200px; height: 95px; display: flex; align-items: center; gap: 4px; padding-left: 13px; background: #222f55; color: #d9dadd; }
.brand svg { width: 47px; height: 62px; }
.name { display: flex; align-items: center; gap: 2px; font-family: "Noto Sans CJK SC", sans-serif; font-weight: 700; font-size: 28px; line-height: 34px; }
.name span { font-family: Roboto, sans-serif; font-weight: 500; font-size: 34px; }
.site { font-family: Inter, sans-serif; font-size: 24px; line-height: 26px; }
```
